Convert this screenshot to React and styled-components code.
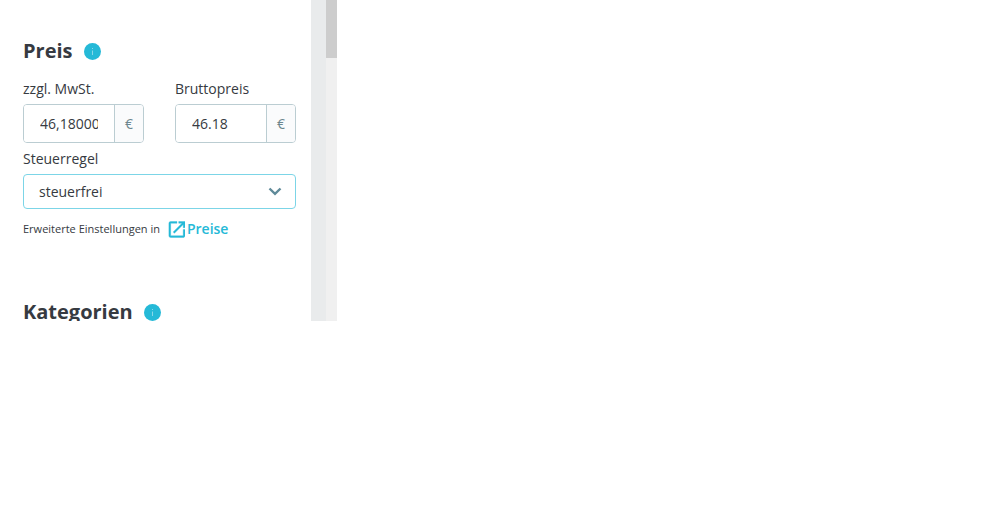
import React, { useState } from 'react';
import styled, { createGlobalStyle } from 'styled-components';

const GlobalStyle = createGlobalStyle`
  * {
    box-sizing: border-box;
  }

  body {
    margin: 0;
    background-color: #fff;
    color: #363a41;
    font-family: 'Open Sans', 'Noto Sans', Arial, sans-serif;
    font-size: 14px;
    line-height: 18px;
  }
`;

const Panel = styled.div`
  display: flex;
  width: 100%;
  max-width: 337px;
  max-height: 321px;
  overflow: hidden;
`;

const Content = styled.main`
  flex: 1;
  min-width: 0;
  padding: 39px 15px 0 23px;
`;

const Gutter = styled.div`
  flex: none;
  width: 15px;
  background-color: #e9ebec;
`;

const Track = styled.div`
  flex: none;
  width: 11px;
  background-color: #f0f0f0;
`;

const Thumb = styled.div`
  height: 58px;
  background-color: #cdcdcd;
`;

const Section = styled.section`
  margin-bottom: 61px;
`;

const Heading = styled.div`
  display: flex;
  align-items: center;
  gap: 11px;
  margin-bottom: 17px;
`;

const Title = styled.h2`
  margin: 0;
  font-size: 20px;
  font-weight: 700;
  line-height: 24px;
`;

const InfoButton = styled.button`
  display: flex;
  padding: 0;
  border: 0;
  background: none;
  color: #25b9d7;
  cursor: pointer;
`;

const PriceRow = styled.div`
  display: grid;
  grid-template-columns: repeat(2, minmax(0, 1fr));
  gap: 31px;
  margin-bottom: 7px;
`;

const Label = styled.label`
  display: block;
  margin-bottom: 6px;
`;

const InputGroup = styled.div`
  display: flex;
  height: 39px;
  border: 1px solid #bbcdd2;
  border-radius: 4px;
  overflow: hidden;
`;

const Input = styled.input`
  flex: 1;
  min-width: 0;
  padding: 0 16px;
  border: 0;
  outline: 0;
  background-color: #fff;
  color: inherit;
  font: inherit;
`;

const Unit = styled.span`
  display: flex;
  flex: none;
  align-items: center;
  justify-content: center;
  width: 29px;
  border-left: 1px solid #bbcdd2;
  background-color: #fafbfc;
  color: #6c868e;
`;

const SelectBox = styled.div`
  display: grid;
  align-items: center;
  margin-bottom: 10px;

  > * {
    grid-area: 1 / 1;
  }

  svg {
    justify-self: end;
    margin-right: 14px;
    pointer-events: none;
  }
`;

const Select = styled.select`
  width: 100%;
  height: 35px;
  padding: 0 32px 0 15px;
  appearance: none;
  border: 1px solid #7cd5e7;
  border-radius: 4px;
  outline: 0;
  background-color: #fff;
  color: inherit;
  font: inherit;
`;

const Hint = styled.p`
  display: flex;
  align-items: center;
  gap: 8px;
  margin: 0;
  font-size: 11px;
`;

const PriceLink = styled.a`
  display: flex;
  align-items: center;
  gap: 2px;
  color: #25b9d7;
  font-size: 14px;
  font-weight: 600;
  line-height: 20px;
  text-decoration: none;
`;

const InfoIcon = () => (
  <svg width='17' height='17' viewBox='0 0 17 17' aria-hidden='true'>
    <circle cx='8.5' cy='8.5' r='8.5' fill='currentColor' />
    <path d='M8 5h1v1H8zM8 7.5h1V12H8z' fill='#fff' fillOpacity='0.45' />
  </svg>
);

const ChevronIcon = () => (
  <svg width='14' height='9' viewBox='0 0 14 9' aria-hidden='true'>
    <path d='M1.5 1.5 7 6.9l5.5-5.4' fill='none' stroke='#5f8a99' strokeWidth='2.4' />
  </svg>
);

const OpenIcon = () => (
  <svg width='17' height='17' viewBox='2 2.5 19 19' aria-hidden='true'>
    <path
      fill='currentColor'
      stroke='currentColor'
      strokeWidth='0.4'
      d='M19 19H5V5h7V3H5a2 2 0 0 0-2 2v14a2 2 0 0 0 2 2h14c1.1 0 2-.9 2-2v-7h-2v7zM14 3v2h3.59l-9.83 9.83 1.41 1.41L19 6.41V10h2V3h-7z'
    />
  </svg>
);

const SectionHeading = ({ title }) => (
  <Heading>
    <Title>{title}</Title>
    <InfoButton type='button' aria-label={`Info ${title}`}>
      <InfoIcon />
    </InfoButton>
  </Heading>
);

const PriceField = ({ id, label, initial }) => {
  const [value, setValue] = useState(initial);

  return (
    <div>
      <Label htmlFor={id}>{label}</Label>
      <InputGroup>
        <Input id={id} type='text' value={value} onChange={(e) => setValue(e.target.value)} />
        <Unit>€</Unit>
      </InputGroup>
    </div>
  );
};

const App = () => {
  return (
    <>
      <GlobalStyle />
      <Panel>
        <Content>
          <Section>
            <SectionHeading title='Preis' />
            <PriceRow>
              <PriceField id='price-net' label='zzgl. MwSt.' initial='46,180000' />
              <PriceField id='price-gross' label='Bruttopreis' initial='46.18' />
            </PriceRow>
            <Label htmlFor='tax-rule'>Steuerregel</Label>
            <SelectBox>
              <Select id='tax-rule' defaultValue='none'>
                <option value='none'>steuerfrei</option>
              </Select>
              <ChevronIcon />
            </SelectBox>
            <Hint>
              Erweiterte Einstellungen in
              <PriceLink href='#preise'>
                <OpenIcon />
                Preise
              </PriceLink>
            </Hint>
          </Section>
          <SectionHeading title='Kategorien' />
        </Content>
        <Gutter />
        <Track>
          <Thumb />
        </Track>
      </Panel>
    </>
  );
};

export default App;
